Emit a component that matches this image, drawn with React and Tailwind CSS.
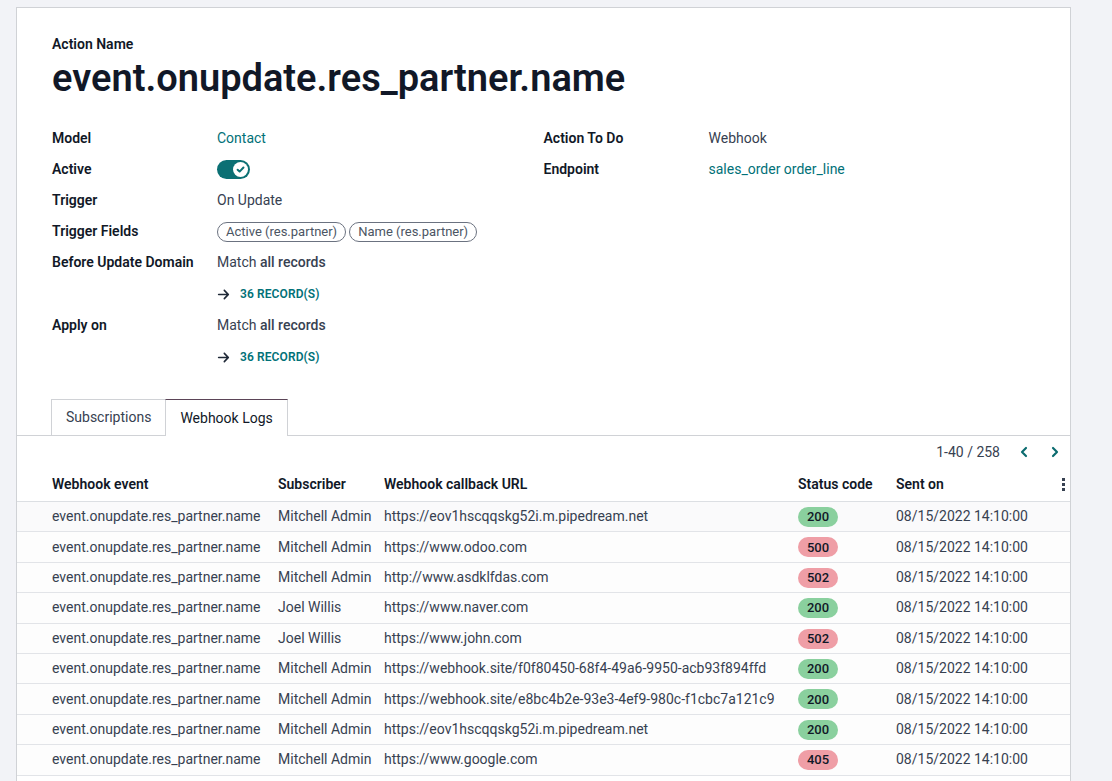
import React from "react";
import { ChevronLeft, ChevronRight } from "lucide-react";

const rows = [
    ["Mitchell Admin", "https://eov1hscqqskg52i.m.pipedream.net", 200],
    ["Mitchell Admin", "https://www.odoo.com", 500],
    ["Mitchell Admin", "http://www.asdklfdas.com", 502],
    ["Joel Willis", "https://www.naver.com", 200],
    ["Joel Willis", "https://www.john.com", 502],
    ["Mitchell Admin", "https://webhook.site/f0f80450-68f4-49a6-9950-acb93f894ffd", 200],
    ["Mitchell Admin", "https://webhook.site/e8bc4b2e-93e3-4ef9-980c-f1cbc7a121c9", 200],
    ["Mitchell Admin", "https://eov1hscqqskg52i.m.pipedream.net", 200],
    ["Mitchell Admin", "https://www.google.com", 405],
];

const Arrow = () => (
    <svg width="13" height="13" viewBox="0 0 448 512" className="fill-[#1f2937]">
        <path d="M438.6 278.6c12.5-12.5 12.5-32.8 0-45.3l-160-160c-12.5-12.5-32.8-12.5-45.3 0s-12.5 32.8 0 45.3L338.8 224H32c-17.7 0-32 14.3-32 32s14.3 32 32 32h306.7L233.4 393.4c-12.5 12.5-12.5 32.8 0 45.3s32.8 12.5 45.3 0l160-160z" />
    </svg>
);

const Field = ({ label, children, h = "h-[31px]" }) => (
    <div className={`flex items-center ${h}`}>
        <div className="w-[165px] shrink-0 font-semibold text-[#111827]">{label}</div>
        <div className="flex items-center text-[#374151]">{children}</div>
    </div>
);

const Records = () => (
    <div className="flex items-center h-[32px] pl-[165px]">
        <Arrow />
        <span className="ml-[10px] text-[12px] font-semibold text-[#017178] tracking-[0.1px]">36 RECORD(S)</span>
    </div>
);

const Tag = ({ children }) => (
    <span className="inline-flex items-center h-[20px] px-[8px] mr-[3px] rounded-full border border-[#6b7280] text-[13px] text-[#4b5563]">
        {children}
    </span>
);

const App = () => {
    return (
        <div className="min-h-screen bg-[#f2f3f7] font-['Roboto',sans-serif] text-[14px] overflow-hidden h-[781px]">
            <div className="ml-4 mr-[41px] pt-[7px]">
                <div className="bg-white border border-[#d0d2d6] border-b-0 min-h-[800px]">
                    <div className="px-[35px] pt-[26px]">
                        <div className="font-semibold text-[#111827] leading-[20px] mb-[2px]">Action Name</div>
                        <h1 className="text-[38px] leading-[44px] font-semibold text-[#111827]">
                            event.onupdate.res_partner.name
                        </h1>

                        <div className="grid grid-cols-2 mt-[23px]">
                            <div>
                                <Field label="Model">
                                    <span className="text-[#017178]">Contact</span>
                                </Field>
                                <Field label="Active">
                                    <span className="flex items-center justify-end w-[33px] h-[19px] rounded-full bg-[#0b7074] pr-[2px]">
                                        <span className="flex items-center justify-center w-[15px] h-[15px] rounded-full bg-white">
                                            <svg width="9" height="9" viewBox="0 0 10 10" fill="none">
                                                <path d="M1.8 5.2 L4 7.3 L8.3 2.8" stroke="#0b7074" strokeWidth="2.2" strokeLinecap="round" strokeLinejoin="round" />
                                            </svg>
                                        </span>
                                    </span>
                                </Field>
                                <Field label="Trigger">On Update</Field>
                                <Field label="Trigger Fields">
                                    <Tag>Active (res.partner)</Tag>
                                    <Tag>Name (res.partner)</Tag>
                                </Field>
                                <Field label="Before Update Domain">
                                    Match&nbsp;<span className="font-medium">all records</span>
                                </Field>
                                <Records />
                                <Field label="Apply on">
                                    Match&nbsp;<span className="font-medium">all records</span>
                                </Field>
                                <Records />
                            </div>
                            <div>
                                <Field label="Action To Do">Webhook</Field>
                                <Field label="Endpoint">
                                    <span className="text-[#017178]">sales_order order_line</span>
                                </Field>
                            </div>
                        </div>
                    </div>

                    <div className="flex mt-[26px] pl-[34px] border-b border-[#d0d2d6] h-[37px]">
                        <div className="flex items-center px-[14px] border border-b-0 border-[#d0d2d6] text-[#374151] h-[36px]">
                            Subscriptions
                        </div>
                        <div className="flex items-center px-[14px] border border-b-0 border-[#d0d2d6] border-t-[#5b4457] bg-white text-[#111827] h-[37px] -ml-px">
                            Webhook Logs
                        </div>
                    </div>

                    <div className="flex items-center justify-end h-[32px] pr-[7px] text-[#374151]">
                        <span>1-40 / 258</span>
                        <ChevronLeft size={16} strokeWidth={3.2} className="ml-[16px] text-[#0b6b6f]" />
                        <ChevronRight size={16} strokeWidth={3.2} className="ml-[15px] text-[#0b6b6f]" />
                    </div>

                    <div className="flex items-center h-[34px] pl-[35px] pr-[3px] border-b border-[#dcdfe3] font-semibold text-[#111827]">
                        <div className="w-[226px]">Webhook event</div>
                        <div className="w-[106px]">Subscriber</div>
                        <div className="w-[414px]">Webhook callback URL</div>
                        <div className="w-[98px]">Status code</div>
                        <div className="flex-1">Sent on</div>
                        <div className="flex flex-col gap-[2px] items-center w-[4px] mr-[2px]">
                            <span className="w-[3px] h-[3px] bg-[#374151]" />
                            <span className="w-[3px] h-[3px] bg-[#374151]" />
                            <span className="w-[3px] h-[3px] bg-[#374151]" />
                        </div>
                    </div>

                    {rows.map(([who, url, code], i) => (
                        <div
                            key={i}
                            className={`flex items-center h-[30.4px] pl-[35px] border-b border-[#e2e4e8] text-[#374151] ${i === 0 ? "bg-[#fafafb]" : "bg-[#fdfdfd]"}`}
                        >
                            <div className="w-[226px]">event.onupdate.res_partner.name</div>
                            <div className="w-[106px]">{who}</div>
                            <div className="w-[414px]">{url}</div>
                            <div className="w-[98px]">
                                <span
                                    className={`inline-flex items-center justify-center w-[40px] h-[20px] rounded-full text-[13px] font-medium text-[#111827] ${code === 200 ? "bg-[#8ad09e]" : "bg-[#ef9ea6]"}`}
                                >
                                    {code}
                                </span>
                            </div>
                            <div className="flex-1">08/15/2022 14:10:00</div>
                        </div>
                    ))}
                </div>
            </div>
        </div>
    );
};

export default App;
